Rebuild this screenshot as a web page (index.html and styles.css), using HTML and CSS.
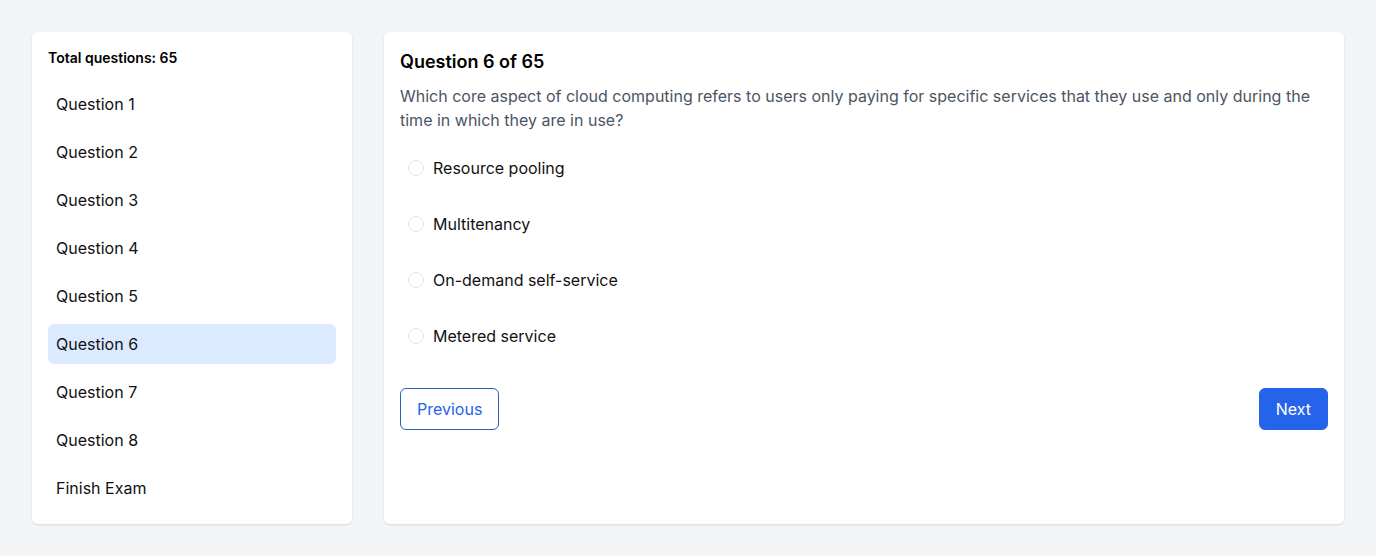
FILE: index.html
```html
<!DOCTYPE html>
<html lang="en">
<head>
<meta charset="utf-8">
<title>Exam</title>
<link rel="stylesheet" href="styles.css">
</head>
<body>
<div class="layout">
  <aside class="sidebar">
    <div class="sidebar-title">Total questions: 65</div>
    <ul class="qlist">
      <li class="qitem">Question 1</li>
      <li class="qitem">Question 2</li>
      <li class="qitem">Question 3</li>
      <li class="qitem">Question 4</li>
      <li class="qitem">Question 5</li>
      <li class="qitem active">Question 6</li>
      <li class="qitem">Question 7</li>
      <li class="qitem">Question 8</li>
      <li class="qitem">Finish Exam</li>
    </ul>
  </aside>
  <main class="panel">
    <h2 class="q-title">Question 6 of 65</h2>
    <p class="q-text">Which core aspect of cloud computing refers to users only paying for specific services that they use and only during the time in which they are in use?</p>
    <div class="options">
      <label class="option"><input type="radio" name="a" class="radio"><span>Resource pooling</span></label>
      <label class="option"><input type="radio" name="a" class="radio"><span>Multitenancy</span></label>
      <label class="option"><input type="radio" name="a" class="radio"><span>On-demand self-service</span></label>
      <label class="option"><input type="radio" name="a" class="radio"><span>Metered service</span></label>
    </div>
    <div class="nav">
      <button class="btn btn-outline">Previous</button>
      <button class="btn btn-primary">Next</button>
    </div>
  </main>
</div>
</body>
</html>
```
FILE: styles.css
```css
* { box-sizing: border-box; }
html, body { margin: 0; padding: 0; }
body {
  background: #f3f4f6;
  font-family: Inter, "Noto Sans", sans-serif;
  color: #111827;
}
.layout {
  display: flex;
  gap: 32px;
  padding: 32px;
  align-items: stretch;
}
.sidebar, .panel {
  background: #fff;
  border-radius: 6px;
  box-shadow: 0 1px 3px rgba(0,0,0,0.08), 0 1px 2px rgba(0,0,0,0.04);
  padding: 16px;
}
.sidebar {
  width: 320px;
  flex: none;
}
.sidebar-title {
  font-size: 14px;
  line-height: 20px;
  font-weight: 600;
  color: #000;
  margin-bottom: 16px;
}
.qlist {
  list-style: none;
  margin: 0;
  padding: 0;
  display: flex;
  flex-direction: column;
  gap: 8px;
}
.qitem {
  height: 40px;
  padding: 8px;
  font-size: 16px;
  line-height: 24px;
  border-radius: 6px;
  color: #111;
}
.qitem.active { background: #dbeafe; }
.panel {
  flex: 1;
}
.q-title {
  margin: 0 0 8px;
  font-size: 18px;
  line-height: 28px;
  font-weight: 600;
  color: #000;
}
.q-text {
  margin: 0 0 8px;
  font-size: 16px;
  line-height: 24px;
  color: #4b5563;
}
.options { display: flex; flex-direction: column; }
.option {
  display: flex;
  align-items: center;
  gap: 9px;
  padding: 16px 8px;
  font-size: 16px;
  line-height: 24px;
  color: #111;
}
.radio {
  appearance: none;
  -webkit-appearance: none;
  margin: 0;
  width: 16px;
  height: 16px;
  border: 1px solid #e5e7eb;
  border-radius: 50%;
  background: #fff;
}
.nav {
  display: flex;
  justify-content: space-between;
  margin-top: 24px;
}
.btn {
  font-family: inherit;
  font-size: 16px;
  line-height: 24px;
  padding: 8px 16px;
  border-radius: 6px;
  border: 1px solid #2563eb;
}
.btn-outline {
  background: #fff;
  color: #2563eb;
  border-color: #2c5fb8;
}
.btn-primary {
  background: #2563eb;
  color: #fff;
}
```
